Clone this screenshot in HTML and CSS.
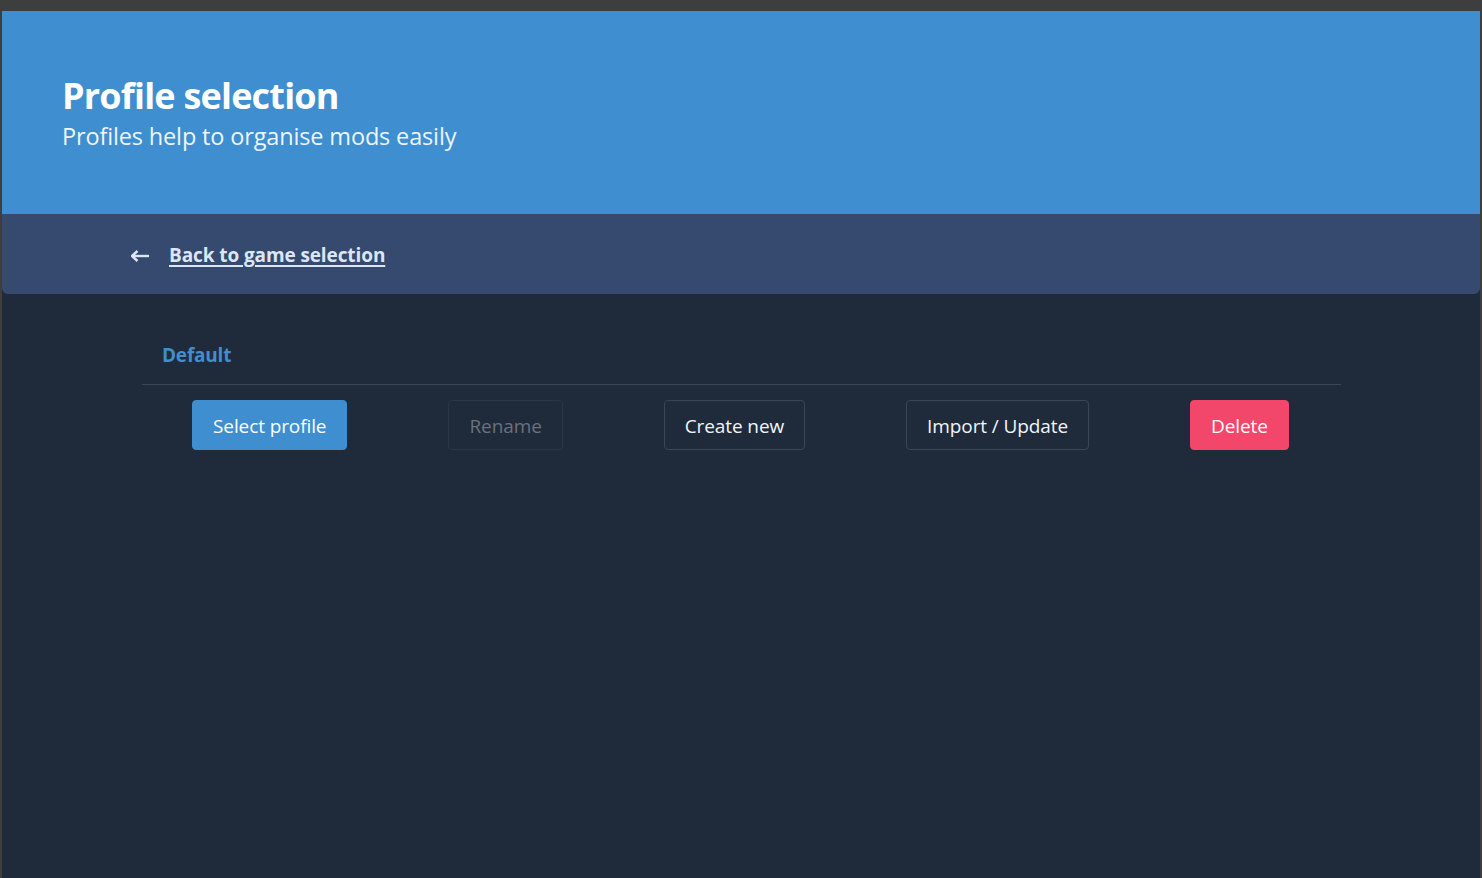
FILE: index.html
```html
<!DOCTYPE html>
<html>
<head>
<meta charset="utf-8">
<link rel="stylesheet" href="styles.css">
</head>
<body>
<div class="topbar"></div>
<div class="window">
  <section class="hero">
    <h1 class="title">Profile selection</h1>
    <p class="subtitle">Profiles help to organise mods easily</p>
  </section>
  <nav class="backbar">
    <span class="arrow"><svg width="19" height="12" viewBox="0 0 19 12"><path d="M1 6 H18" stroke="#dbe7f7" stroke-width="2.4" fill="none"/><path d="M6.5 1 L1 6 L6.5 11" stroke="#dbe7f7" stroke-width="2.4" fill="none" stroke-linejoin="miter"/></svg></span>
    <a class="backlink" href="#">Back to game selection</a>
  </nav>
  <main class="content">
    <div class="profile">Default</div>
    <div class="actions">
      <button class="btn btn-primary">Select profile</button>
      <button class="btn btn-disabled">Rename</button>
      <button class="btn btn-outline">Create new</button>
      <button class="btn btn-outline">Import / Update</button>
      <button class="btn btn-danger">Delete</button>
    </div>
  </main>
</div>
</body>
</html>
```
FILE: styles.css
```css
html, body {
  margin: 0;
  padding: 0;
  height: 100%;
  background: #3e3e3e;
  font-family: "Open Sans", "Noto Sans", sans-serif;
  overflow: hidden;
}
.topbar {
  height: 11px;
  background: #3e3e3e;
}
.window {
  margin-left: 2px;
  margin-right: 2px;
  height: 867px;
  background: #1f2b3a;
  display: flex;
  flex-direction: column;
}
.hero {
  background: #3f8ed0;
  height: 203px;
  box-sizing: border-box;
  padding: 64px 0 0 60px;
}
.title {
  margin: 0;
  color: #ffffff;
  font-size: 36px;
  font-weight: 700;
  line-height: 42px;
  letter-spacing: -0.8px;
}
.subtitle {
  margin: 4px 0 0 0;
  color: #eef5fc;
  font-size: 23.5px;
  line-height: 30px;
  letter-spacing: -0.15px;
}
.backbar {
  background: #354a6e;
  height: 80px;
  box-sizing: border-box;
  padding-top: 2px;
  border-radius: 0 0 6px 6px;
  display: flex;
  align-items: center;
  padding-left: 129px;
  gap: 19px;
}
.arrow {
  display: flex;
  align-items: center;
  padding-top: 1px;
}
.backlink {
  color: #dbe7f7;
  font-weight: 700;
  font-size: 19px;
  letter-spacing: -0.1px;
  text-decoration: underline;
  text-underline-offset: 3px;
  text-decoration-thickness: 2px;
}
.content {
  margin: 0 139px 0 140px;
  padding-top: 40px;
}
.profile {
  color: #3f8ed0;
  font-weight: 700;
  font-size: 19px;
  letter-spacing: -0.2px;
  line-height: 42px;
  padding-left: 20px;
  height: 50px;
  border-bottom: 1px solid #3a4757;
}
.actions {
  display: flex;
  gap: 101px;
  padding: 15px 0 0 50px;
}
.btn {
  height: 50px;
  box-sizing: border-box;
  border-radius: 4px;
  font-family: inherit;
  font-size: 19px;
  letter-spacing: -0.1px;
  padding: 1px 20px 0 20px;
  border: 1px solid #3b4654;
  background: transparent;
  color: #f1f5fa;
}
.btn-primary {
  background: #3f8ed0;
  border-color: #3f8ed0;
  color: #ffffff;
}
.btn-disabled {
  color: #69727d;
  border-color: #2c3645;
}
.btn-danger {
  background: #f2466a;
  border-color: #f2466a;
  color: #ffffff;
}
```
